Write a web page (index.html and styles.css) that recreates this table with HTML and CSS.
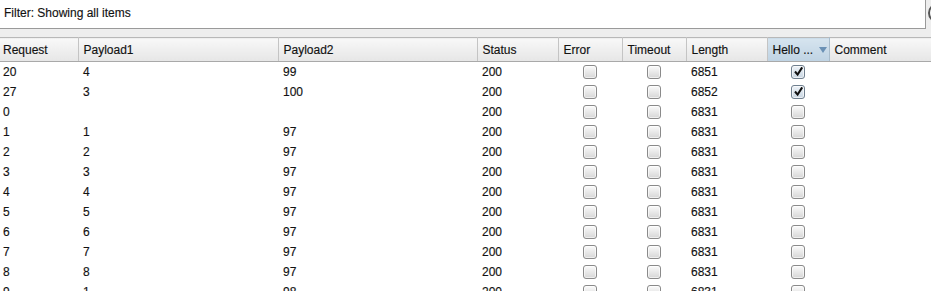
FILE: index.html
```html
<!DOCTYPE html>
<html>
<head>
<meta charset="utf-8">
<link rel="stylesheet" href="styles.css">
</head>
<body>
<div class="page">
  <div class="filter-row">
    <div class="filter-box">Filter: Showing all items</div>
    <div class="help-btn"></div>
  </div>
  <div class="strip"></div>
  <table class="grid">
    <colgroup>
      <col class="c-req"><col class="c-p1"><col class="c-p2"><col class="c-status"><col class="c-err"><col class="c-to"><col class="c-len"><col class="c-hello"><col class="c-comment">
    </colgroup>
    <thead>
      <tr>
        <th>Request</th><th>Payload1</th><th>Payload2</th><th>Status</th><th>Error</th><th>Timeout</th><th>Length</th><th class="sorted"><span class="hl">Hello ...</span><span class="arrow"></span></th><th>Comment</th>
      </tr>
    </thead>
    <tbody>
      <tr><td>20</td><td>4</td><td>99</td><td>200</td><td class="cb"><span class="box"></span></td><td class="cb"><span class="box"></span></td><td>6851</td><td class="cb"><span class="box on"><svg viewBox="0 0 11 11" width="11" height="11"><path d="M2 5.5 L4.6 8.6 L9.2 1.4" fill="none" stroke="#111" stroke-width="2"/></svg></span></td><td></td></tr>
      <tr><td>27</td><td>3</td><td>100</td><td>200</td><td class="cb"><span class="box"></span></td><td class="cb"><span class="box"></span></td><td>6852</td><td class="cb"><span class="box on"><svg viewBox="0 0 11 11" width="11" height="11"><path d="M2 5.5 L4.6 8.6 L9.2 1.4" fill="none" stroke="#111" stroke-width="2"/></svg></span></td><td></td></tr>
      <tr><td>0</td><td></td><td></td><td>200</td><td class="cb"><span class="box"></span></td><td class="cb"><span class="box"></span></td><td>6831</td><td class="cb"><span class="box"></span></td><td></td></tr>
      <tr><td>1</td><td>1</td><td>97</td><td>200</td><td class="cb"><span class="box"></span></td><td class="cb"><span class="box"></span></td><td>6831</td><td class="cb"><span class="box"></span></td><td></td></tr>
      <tr><td>2</td><td>2</td><td>97</td><td>200</td><td class="cb"><span class="box"></span></td><td class="cb"><span class="box"></span></td><td>6831</td><td class="cb"><span class="box"></span></td><td></td></tr>
      <tr><td>3</td><td>3</td><td>97</td><td>200</td><td class="cb"><span class="box"></span></td><td class="cb"><span class="box"></span></td><td>6831</td><td class="cb"><span class="box"></span></td><td></td></tr>
      <tr><td>4</td><td>4</td><td>97</td><td>200</td><td class="cb"><span class="box"></span></td><td class="cb"><span class="box"></span></td><td>6831</td><td class="cb"><span class="box"></span></td><td></td></tr>
      <tr><td>5</td><td>5</td><td>97</td><td>200</td><td class="cb"><span class="box"></span></td><td class="cb"><span class="box"></span></td><td>6831</td><td class="cb"><span class="box"></span></td><td></td></tr>
      <tr><td>6</td><td>6</td><td>97</td><td>200</td><td class="cb"><span class="box"></span></td><td class="cb"><span class="box"></span></td><td>6831</td><td class="cb"><span class="box"></span></td><td></td></tr>
      <tr><td>7</td><td>7</td><td>97</td><td>200</td><td class="cb"><span class="box"></span></td><td class="cb"><span class="box"></span></td><td>6831</td><td class="cb"><span class="box"></span></td><td></td></tr>
      <tr><td>8</td><td>8</td><td>97</td><td>200</td><td class="cb"><span class="box"></span></td><td class="cb"><span class="box"></span></td><td>6831</td><td class="cb"><span class="box"></span></td><td></td></tr>
      <tr><td>9</td><td>1</td><td>98</td><td>200</td><td class="cb"><span class="box"></span></td><td class="cb"><span class="box"></span></td><td>6831</td><td class="cb"><span class="box"></span></td><td></td></tr>
    </tbody>
  </table>
</div>
</body>
</html>
```
FILE: styles.css
```css
html, body {
  margin: 0;
  padding: 0;
  background: #ffffff;
}
.page {
  width: 931px;
  height: 291px;
  overflow: hidden;
  font-family: "Liberation Sans", Arial, sans-serif;
  font-size: 12px;
  color: #121212;
  -webkit-text-stroke: 0.15px #121212;
  background: #eeeeee;
}
.filter-row {
  display: flex;
  align-items: flex-start;
  height: 29px;
  background: #eeeeee;
}
.filter-box {
  box-sizing: border-box;
  width: 926px;
  flex: none;
  height: 29px;
  background: #ffffff;
  border-right: 1px solid #9a9a9a;
  border-bottom: 1px solid #9a9a9a;
  padding: 6px 0 0 4px;
  line-height: 14px;
}
.help-btn {
  flex: none;
  box-sizing: border-box;
  width: 20px;
  height: 20px;
  margin: 3px 0 0 2px;
  border: 2px solid #555555;
  border-radius: 50%;
  background: #f4f4f4;
}
.strip {
  height: 8px;
  background: #eeeeee;
}
.grid {
  table-layout: fixed;
  border-collapse: collapse;
  width: 1000px;
  background: #ffffff;
}
.c-req { width: 78px; }
.c-p1 { width: 200px; }
.c-p2 { width: 199px; }
.c-status { width: 81px; }
.c-err { width: 64px; }
.c-to { width: 64px; }
.c-len { width: 81px; }
.c-hello { width: 62px; }
.c-comment { width: 171px; }
.grid th {
  height: 24px;
  padding: 0 0 0 5px;
  text-align: left;
  font-weight: normal;
  white-space: nowrap;
  background: linear-gradient(#f8f8f8, #e6e6e6);
  border-top: 1px solid #b8b8b8;
  border-bottom: 1px solid #a9a9a9;
  border-right: 1px solid #c4c4c4;
  box-sizing: border-box;
  line-height: 14px;
}
.grid th:first-child { padding-left: 3px; }
.grid th.sorted {
  background: linear-gradient(#d6e4ef, #bfd3e3);
  border-right: 1px solid #a9bccb;
}
.hl { vertical-align: middle; }
.arrow {
  display: inline-block;
  vertical-align: middle;
  margin-left: 6px;
  width: 0;
  height: 0;
  border-left: 4px solid transparent;
  border-right: 4px solid transparent;
  border-top: 6px solid #6b91b5;
}
.grid td {
  height: 20px;
  padding: 0 0 0 5px;
  line-height: 20px;
  white-space: nowrap;
  overflow: hidden;
  box-sizing: border-box;
}
.grid td:first-child { padding-left: 3px; }
.grid td.cb {
  padding: 0;
  text-align: center;
  font-size: 0;
  line-height: 0;
  vertical-align: middle;
}
.box {
  display: inline-block;
  box-sizing: border-box;
  width: 14px;
  height: 14px;
  border: 1px solid #8a8a8a;
  border-radius: 3px;
  background: linear-gradient(#fbfbfb, #d6d6d6);
  box-shadow: inset 0 0 0 1px rgba(255,255,255,0.6);
  vertical-align: middle;
  position: relative;
}
.box.on {
  background: linear-gradient(#eef3f8, #c9d6e2);
  border-color: #6f7f8e;
}
.box svg {
  position: absolute;
  left: 1px;
  top: 0px;
}
```
